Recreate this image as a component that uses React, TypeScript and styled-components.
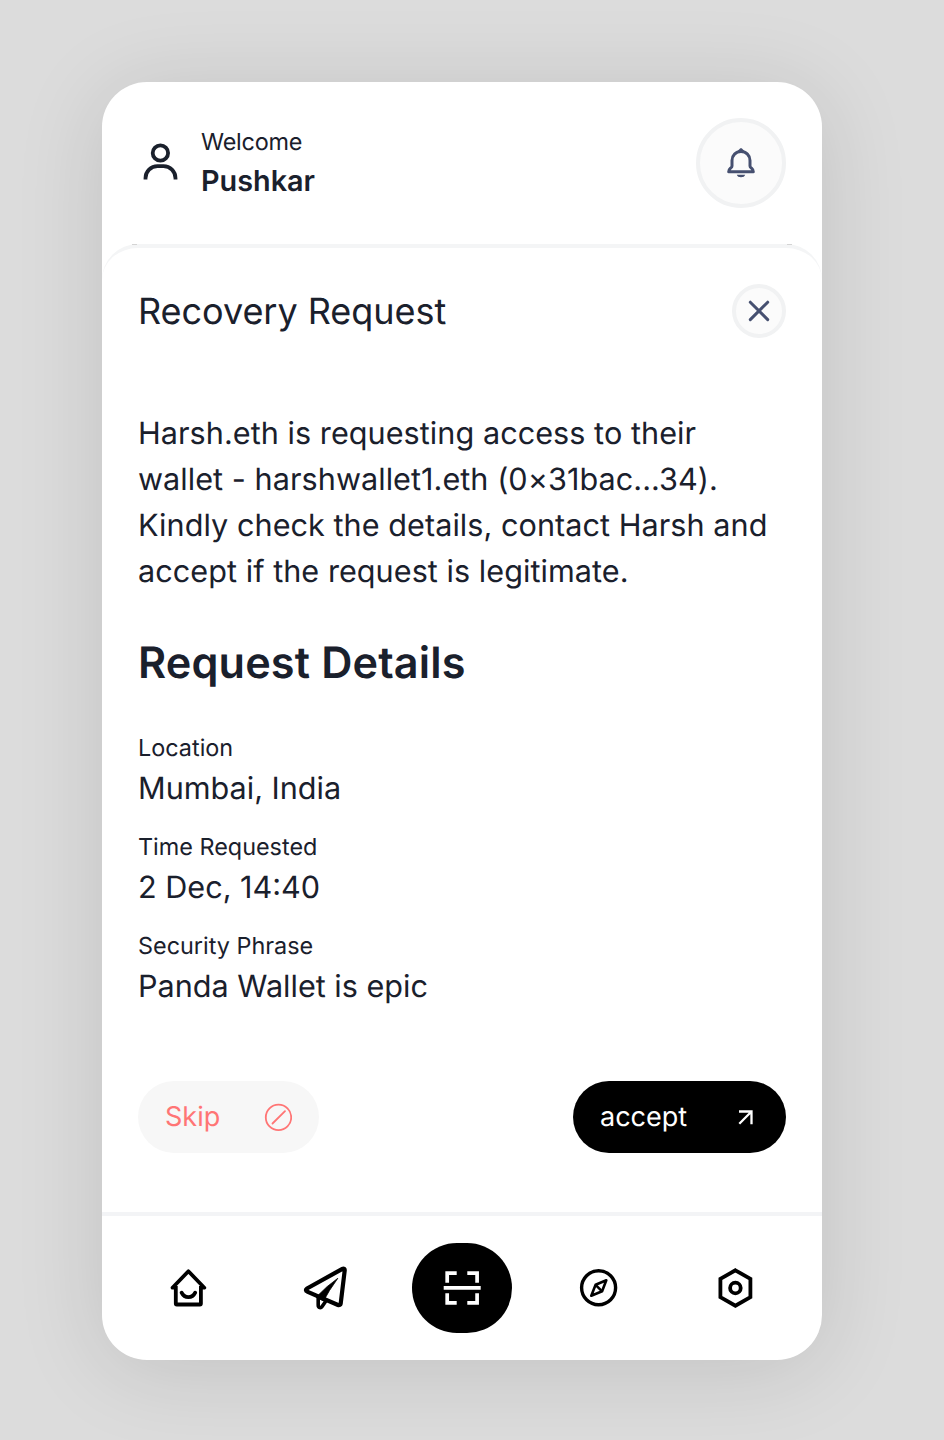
import React from "react";
import styled, { createGlobalStyle } from "styled-components";

const Global = createGlobalStyle`
  * { box-sizing: border-box; }
  body {
    margin: 0;
    background: #dcdcdc;
    color: #1a202c;
    font-family: Inter, "Liberation Sans", sans-serif;
    text-rendering: geometricPrecision;
    -webkit-font-smoothing: antialiased;
  }
  button { font: inherit; border: 0; padding: 0; cursor: pointer; text-rendering: inherit; }
  svg { display: block; flex: none; }
`;

const Stage = styled.main`
  height: 1440px;
  padding: 82px 122px 80px 102px;
  overflow: hidden;
`;

const Card = styled.div`
  display: flex;
  flex-direction: column;
  width: 720px;
  height: 1278px;
  border-radius: 45px;
  background: #fff;
  box-shadow: 0 9px 90px rgba(0, 0, 0, 0.12);
  overflow: hidden;
`;

const Header = styled.header`
  display: flex;
  align-items: center;
  height: 162px;
  padding: 0 36px;
`;

const Greeting = styled.div`
  flex: 1;
  margin-left: 19px;
  padding-bottom: 1px;
`;

const Welcome = styled.div`
  font-size: 23.4px;
  line-height: 35px;
  letter-spacing: -0.2px;
`;

const UserName = styled.div`
  font-size: 28.8px;
  line-height: 43px;
  font-weight: 600;
`;

const RoundButton = styled.button<{ $size: number }>`
  display: flex;
  align-items: center;
  justify-content: center;
  width: ${(p) => p.$size}px;
  height: ${(p) => p.$size}px;
  border: 4px solid #f1f2f3;
  border-radius: 50%;
  background: #fbfbfb;
  color: #465070;
`;

const Sheet = styled.section`
  position: relative;
  display: flex;
  flex-direction: column;
  height: 968px;
  padding: 36px 36px 0;
  border-top: 4px solid #f4f5f6;
  border-radius: 36px 36px 0 0;

  &::before,
  &::after {
    content: "";
    position: absolute;
    top: -4px;
    width: 5px;
    height: 1px;
    background: #d4d4d4;
  }
  &::before { left: 30px; }
  &::after { right: 30px; }
`;

const TitleRow = styled.div`
  display: flex;
  align-items: center;
  justify-content: space-between;
  height: 54px;
`;

const Title = styled.h1`
  margin: 0;
  font-size: 36px;
  font-weight: 400;
  line-height: 54px;
  letter-spacing: -0.04px;
`;

const Message = styled.p`
  margin: 73px 0 0;
  font-size: 30.6px;
  line-height: 46px;
  letter-spacing: 0.05px;
  white-space: nowrap;
`;

const Heading = styled.h2`
  margin: 35px 0 0;
  font-size: 43.2px;
  font-weight: 600;
  line-height: 66px;
  letter-spacing: 0.15px;
`;

const Details = styled.dl`
  display: flex;
  flex-direction: column;
  gap: 17px;
  margin: 34px 0 0;
`;

const Term = styled.dt`
  font-size: 23.4px;
  line-height: 35px;
`;

const Value = styled.dd`
  margin: 1px 0 0;
  font-size: 30.6px;
  line-height: 46px;
`;

const Actions = styled.div`
  display: flex;
  justify-content: space-between;
  margin-top: 71px;
`;

const Pill = styled.button<{ $primary?: boolean }>`
  display: flex;
  align-items: center;
  justify-content: space-between;
  width: ${(p) => (p.$primary ? 213 : 181)}px;
  height: 72px;
  padding: 0 27px;
  border-radius: 36px;
  background: ${(p) => (p.$primary ? "#000" : "#f7f7f7")};
  color: ${(p) => (p.$primary ? "#fff" : "#ff7575")};
  font-size: 27px;
`;

const PillLabel = styled.span`
  padding-bottom: 2px;
`;

const Nav = styled.nav`
  display: flex;
  align-items: center;
  justify-content: space-between;
  height: 148px;
  padding: 0 36px;
  border-top: 4px solid #f3f4f6;
`;

const NavItem = styled.button<{ $active?: boolean }>`
  display: flex;
  align-items: center;
  justify-content: center;
  width: 100px;
  height: 90px;
  border-radius: 45px;
  background: ${(p) => (p.$active ? "#000" : "transparent")};
  color: ${(p) => (p.$active ? "#fff" : "#000")};
`;

type IconProps = { size?: number; weight: number; children: React.ReactNode };

const Icon = ({ size = 44, weight, children }: IconProps) => (
  <svg
    width={size}
    height={size}
    viewBox={`0 0 ${size} ${size}`}
    fill="none"
    stroke="currentColor"
    strokeWidth={weight}
  >
    {children}
  </svg>
);

const UserIcon = () => (
  <Icon weight={3.8}>
    <circle cx="22.4" cy="12" r="7.7" />
    <path d="M7.5 38.6v-1.4a12 12 0 0 1 12-12h6a12 12 0 0 1 12 12v1.4" />
  </Icon>
);

const BellIcon = () => (
  <Icon size={36} weight={3}>
    <path d="M18 6.600c-5.200 0-9 3.900-9 8.900v5.400c0 1-.6 1.500-1.500 2.300C6 24.500 5.700 25 5.700 26.800h24.600c0-1.800-.3-2.300-1.800-3.600-.9-.8-1.500-1.300-1.500-2.300v-5.400c0-5-3.800-8.900-9-8.900Z" strokeLinejoin="round" />
    <path d="M14.300 6.200 17.300 3.200h1.400l3 3L18 8Z" fill="currentColor" stroke="none" />
    <path d="M13.800 29.800h8.400a4.300 3.200 0 0 1-8.400 0Z" fill="currentColor" stroke="none" />
  </Icon>
);

const CloseIcon = () => (
  <Icon size={26} weight={3}>
    <path d="m4.300 4.200 17.400 17.400M21.700 4.200 4.300 21.600" strokeLinecap="round" />
  </Icon>
);

const BlockIcon = () => (
  <Icon size={28} weight={1.8}>
    <circle cx="14.5" cy="14.4" r="12.700" />
    <path d="M8.500 20.500 21 8.200" strokeLinecap="round" />
  </Icon>
);

const ArrowIcon = () => (
  <Icon size={28} weight={2.3}>
    <path d="M8 8.500h12.500v12.800M20.500 8.500 8.300 20.700" />
  </Icon>
);

const HomeIcon = () => (
  <Icon weight={3.8}>
    <path d="M9.800 20V37.500a1 1 0 0 0 1 1h23.100a1 1 0 0 0 1-1V20" />
    <path d="M10 21.700H6.500L22.400 5.300l15.900 16.400h-3.500" strokeLinejoin="round" />
    <path d="M15.600 26.700c1.500 3 4 4.500 6.800 4.500s5.300-1.500 6.800-4.500" strokeLinecap="round" />
  </Icon>
);

const SendIcon = () => (
  <Icon weight={4.2}>
    <path d="M39.400 2.800 4 22.500c-1.500.9-1.400 2.500.2 3.100L35 39c1.300.6 2.500-.1 2.700-1.400L41.700 4.400c.2-1.500-1-2.300-2.300-1.600Z" strokeLinejoin="round" />
    <path d="M15.200 31v8.300c0 2.500 2.600 3 3.900 1.100l4.500-6.400" strokeWidth="3.600" strokeLinejoin="round" />
    <path d="M34.800 12.300 26.500 24.500 20.500 35 13 31.300 24 20.700Z" fill="currentColor" stroke="currentColor" strokeWidth="0.8" strokeLinejoin="round" />
  </Icon>
);

const ScanIcon = () => (
  <Icon weight={3.7}>
    <path d="M7.200 16.700V7.200h9.500M27.300 7.200h9.800v9.500M7.200 27.300v9.500h9.500M27.300 36.800h9.800v-9.500M3.700 21.900h37" />
  </Icon>
);

const CompassIcon = () => (
  <Icon weight={3.4}>
    <circle cx="21.600" cy="21.800" r="17" />
    <g strokeWidth="2.600" strokeLinejoin="round">
      <path d="m29.300 14.300-4.200 11-10.800 4.400 4.300-10.900Z" />
      <path d="m18.600 18.800 6.500 6.500" />
    </g>
  </Icon>
);

const SettingsIcon = () => (
  <Icon weight={3.8}>
    <path d="m21.400 4.300 15 8.500v18.400l-15 8.500-15-8.500V12.800Z" />
    <circle cx="21.400" cy="22" r="5.300" />
  </Icon>
);

const request = [
  { term: "Location", value: "Mumbai, India" },
  { term: "Time Requested", value: "2 Dec, 14:40" },
  { term: "Security Phrase", value: "Panda Wallet is epic" },
];

export default function App() {
  return (
    <Stage>
      <Global />
      <Card>
        <Header>
          <UserIcon />
          <Greeting>
            <Welcome>Welcome</Welcome>
            <UserName>Pushkar</UserName>
          </Greeting>
          <RoundButton $size={90} aria-label="Notifications">
            <BellIcon />
          </RoundButton>
        </Header>
        <Sheet>
          <TitleRow>
            <Title>Recovery Request</Title>
            <RoundButton $size={54} aria-label="Close">
              <CloseIcon />
            </RoundButton>
          </TitleRow>
          <Message>
            Harsh.eth is requesting access to their
            <br />
            wallet - harshwallet1.eth (0×31bac...34).
            <br />
            Kindly check the details, contact Harsh and
            <br />
            accept if the request is legitimate.
          </Message>
          <Heading>Request Details</Heading>
          <Details>
            {request.map(({ term, value }) => (
              <div key={term}>
                <Term>{term}</Term>
                <Value>{value}</Value>
              </div>
            ))}
          </Details>
          <Actions>
            <Pill>
              <PillLabel>Skip</PillLabel>
              <BlockIcon />
            </Pill>
            <Pill $primary>
              <PillLabel>accept</PillLabel>
              <ArrowIcon />
            </Pill>
          </Actions>
        </Sheet>
        <Nav>
          <NavItem aria-label="Home"><HomeIcon /></NavItem>
          <NavItem aria-label="Send"><SendIcon /></NavItem>
          <NavItem $active aria-label="Scan"><ScanIcon /></NavItem>
          <NavItem aria-label="Explore"><CompassIcon /></NavItem>
          <NavItem aria-label="Settings"><SettingsIcon /></NavItem>
        </Nav>
      </Card>
    </Stage>
  );
}
